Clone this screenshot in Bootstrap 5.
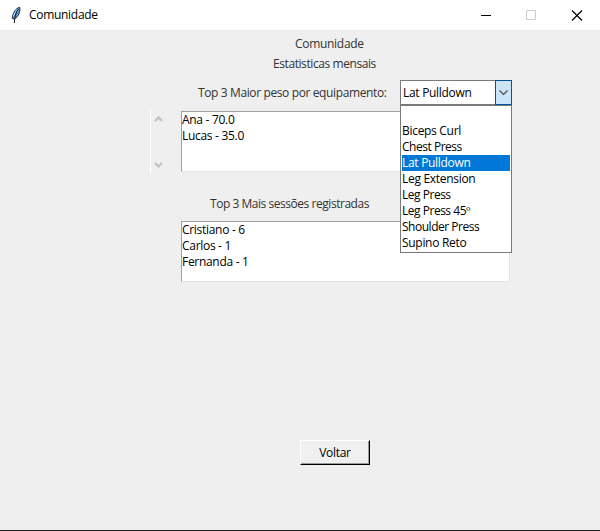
<!DOCTYPE html>
<html lang="pt">
<head>
<meta charset="utf-8">
<meta name="viewport" content="width=device-width, initial-scale=1">
<title>Comunidade</title>
<link href="https://cdn.jsdelivr.net/npm/bootstrap@5.3.0/dist/css/bootstrap.min.css" rel="stylesheet">
<style>
body{font:12px/16px "Open Sans","Noto Sans",sans-serif;color:#000;letter-spacing:-.3px;white-space:nowrap}
.app-window{height:531px;background:#efefef;border-bottom:1px solid #1c1c1c}
.title-bar{height:30px}
.title-bar svg,.combo svg,.scroll-strip svg{display:block}
.feather{margin-left:9px;width:14px}
.caption{margin-left:6px}
.win-btn{width:46px}
.lbl{color:#333;height:20px;line-height:21px}
.lbl-title{margin-top:3px;padding-left:295px}
.lbl-sub{padding-left:273px;letter-spacing:-.42px}
.lbl-sessions{margin-top:19px;padding-left:210px;letter-spacing:-.46px}
.combo-row{height:30px;padding-left:198px;margin-top:7px}
.combo-label{width:202px;line-height:26px;color:#333;letter-spacing:-.38px}
.combo{width:112px;height:25px;border:1px solid #7a7a7a}
.combo-text{padding-left:2px;line-height:24px}
.combo-arrow{width:17px;height:25px;margin:-1px;background:#cce4f7;border:1px solid #00549e}
.combo-menu{position:absolute;top:24px;left:-1px;width:112px;height:148px;border:1px solid #7a7a7a;padding:1px;z-index:5}
.combo-menu li{height:16px;line-height:16px}
.combo-menu li.chosen{background:#0078d7;color:#fff}
.combo-menu li.tight{letter-spacing:-.48px}
.scroll-strip{width:16px;height:64px;margin-left:150px;border-left:1px solid #fff;padding:5px 3px}
.listing{width:329px;height:61px;border:1px solid #a0a0a0;border-right-color:#e3e3e3;border-bottom-color:#e3e3e3}
.listing-weight{margin:1px 0 0 15px}
.listing-sessions{margin:8px 0 0 181px}
.back-btn,.back-btn:hover{width:70px;height:25px;margin:158px 0 0 300px;background:#f0f0f0;border:1px solid;border-color:#fff #000 #000 #fff;box-shadow:inset -1px -1px #9a9a9a;padding:0;font:inherit;line-height:24px;color:#000;letter-spacing:inherit}
</style>
</head>
<body>
<div class="app-window d-flex flex-column overflow-hidden">
  <header class="title-bar bg-white d-flex align-items-center flex-shrink-0">
    <svg class="feather" width="14" height="18" viewBox="0 0 14 18"><path d="M10.7 1.200C7 2.200 3.500 6.500 3.300 12.500L5.500 13C9.500 10.500 11.600 6 10.700 1.200Z" fill="#5b98da" stroke="#18222f" stroke-width=".9"/><path d="M9.500 3C6.800 6.500 5.700 10.500 5.300 17" fill="none" stroke="#101820"/><path d="M8.200 3.500C6.500 5.200 5 7.500 4.500 10" fill="none" stroke="#a9cdf2"/></svg>
    <span class="caption">Comunidade</span>
    <div class="d-flex ms-auto">
      <div class="win-btn"><svg width="46" height="29" shape-rendering="crispEdges"><path d="M19 14.500h10" stroke="#000"/></svg></div>
      <div class="win-btn"><svg width="46" height="29"><path d="M18.500 9.500h9v9h-9z" fill="none" stroke="#ccc"/></svg></div>
      <div class="win-btn"><svg width="46" height="29"><path d="M18 9.500l10 10M28 9.500L18 19.500" stroke="#000" stroke-width="1.200"/></svg></div>
    </div>
  </header>
  <main>
    <div class="lbl lbl-title">Comunidade</div>
    <div class="lbl lbl-sub">Estatisticas mensais</div>
    <div class="combo-row d-flex">
      <div class="combo-label">Top 3 Maior peso por equipamento:</div>
      <div class="combo bg-white d-flex position-relative">
        <span class="combo-text flex-grow-1">Lat Pulldown</span>
        <div class="combo-arrow"><svg width="15" height="23"><path d="M3.500 9.500l4 4 4-4" fill="none" stroke="#444" stroke-width="1.100"/></svg></div>
        <ul class="combo-menu list-unstyled bg-white mb-0">
          <li></li><li>Biceps Curl</li><li class="tight">Chest Press</li><li class="chosen">Lat Pulldown</li><li>Leg Extension</li><li class="tight">Leg Press</li><li class="tight">Leg Press 45º</li><li class="tight">Shoulder Press</li><li>Supino Reto</li>
        </ul>
      </div>
    </div>
    <div class="d-flex">
      <div class="scroll-strip d-flex flex-column justify-content-between">
        <svg width="10" height="8"><path d="M1 6L4.500 2.500 8 6" fill="none" stroke="#bfbfbf" stroke-width="2"/></svg>
        <svg width="10" height="8"><path d="M1 2L4.500 5.500 8 2" fill="none" stroke="#bfbfbf" stroke-width="2"/></svg>
      </div>
      <div class="listing listing-weight bg-white"><div>Ana - 70.0</div><div>Lucas - 35.0</div></div>
    </div>
    <div class="lbl lbl-sessions">Top 3 Mais sessões registradas</div>
    <div class="listing listing-sessions bg-white"><div>Cristiano - 6</div><div>Carlos - 1</div><div>Fernanda - 1</div></div>
    <button type="button" class="btn back-btn rounded-0 d-block">Voltar</button>
  </main>
</div>
<script src="https://cdn.jsdelivr.net/npm/bootstrap@5.3.0/dist/js/bootstrap.bundle.min.js"></script>
</body>
</html>
